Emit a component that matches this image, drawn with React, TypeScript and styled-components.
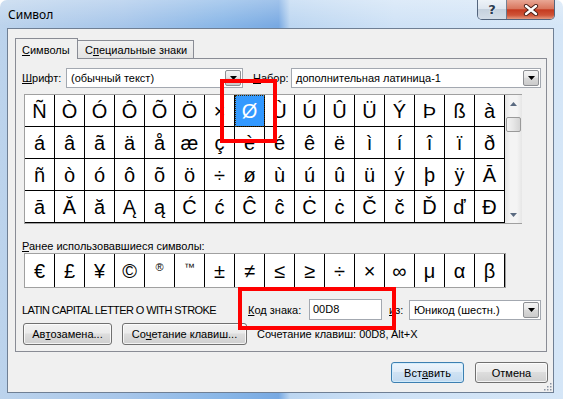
import React from 'react';
import styled, { createGlobalStyle } from 'styled-components';

const GlobalStyle = createGlobalStyle`
  html, body {
    margin: 0;
    padding: 0;
    background: #fff;
  }
  body {
    font-family: 'Liberation Sans', Arial, sans-serif;
    font-size: 11px;
    color: #000;
  }
`;

const GRID_ROWS = [
  'ÑÒÓÔÕÖ×ØÙÚÛÜÝÞßà',
  'áâãäåæçèéêëìíîïð',
  'ñòóôõö÷øùúûüýþÿĀ',
  'āĂăĄąĆćĈĉĊċČčĎďĐ',
];

const RECENT = ['€', '£', '¥', '©', '®', '™', '±', '≠', '≤', '≥', '÷', '×', '∞', 'μ', 'α', 'β'];
const SMALL_RECENT = ['®', '™'];

const Window = styled.div`
  position: relative;
  width: 563px;
  height: 399px;
  display: flex;
  flex-direction: column;
  border-radius: 7px 7px 0 0;
  overflow: hidden;
  background:
    linear-gradient(180deg, rgba(255, 255, 255, 0.3) 0, rgba(255, 255, 255, 0) 26px),
    linear-gradient(90deg, #bcd3ec 0%, #a7c6ea 22%, #88b6e7 40%, #78a9e2 49.5%, #bcd6f1 51.5%, #cfe2f6 70%, #d5e6f7 100%);
`;

const TitleBar = styled.div`
  height: 28px;
  flex-shrink: 0;
  display: flex;
  align-items: flex-start;
  padding: 0 8px;
`;

const Title = styled.div`
  font-family: 'Noto Sans', sans-serif;
  font-size: 12px;
  line-height: 30px;
  color: #000;
`;

const CaptionGroup = styled.div`
  margin-left: auto;
  display: flex;
  height: 20px;
  box-sizing: border-box;
  border: 1px solid rgba(38, 56, 84, 0.75);
  border-top: none;
  border-radius: 0 0 5px 5px;
  overflow: hidden;
`;

const HelpButton = styled.div`
  width: 28px;
  display: flex;
  align-items: center;
  justify-content: center;
  border-right: 1px solid rgba(38, 56, 84, 0.6);
  background: linear-gradient(180deg, #eef3f8 0%, #dfe7f0 45%, #c5d1de 50%, #d3dde8 100%);
  font-family: 'DejaVu Sans', sans-serif;
  font-weight: bold;
  font-size: 13px;
  color: #2a3a50;
  text-shadow: 0 0 2px #fff;
`;

const CloseButton = styled.div`
  width: 47px;
  display: flex;
  align-items: center;
  justify-content: center;
  background: linear-gradient(180deg, #e9a795 0%, #d9775f 45%, #c43a20 52%, #cf5438 80%, #e39a80 100%);
`;

const Client = styled.div`
  position: relative;
  flex: 1;
  margin: 0 9px 6px 7px;
  border: 1px solid #6f7f94;
  background: #f0f0f0;
  padding: 9px 6px 0 7px;
  display: flex;
  flex-direction: column;
`;

const TabStrip = styled.div`
  position: relative;
  z-index: 1;
  height: 21px;
  margin-bottom: -1px;
  display: flex;
  align-items: flex-start;
`;

const Tab = styled.div<{ $active?: boolean; $w: number }>`
  width: ${p => p.$w}px;
  box-sizing: border-box;
  border: 1px solid #898c95;
  border-bottom: none;
  padding-left: ${p => (p.$active ? 6 : 7)}px;
  height: ${p => (p.$active ? 21 : 18)}px;
  margin-top: ${p => (p.$active ? 0 : 2)}px;
  line-height: ${p => (p.$active ? 22 : 18)}px;
  background: ${p => (p.$active ? '#f0f0f0' : 'linear-gradient(180deg, #f2f2f2, #e3e3e3)')};
  ${p => !p.$active && 'border-left: none;'}
  white-space: nowrap;
`;

const Key = styled.span`
  text-decoration: underline;
`;

const Panel = styled.div`
  height: 294px;
  box-sizing: border-box;
  border: 1px solid #898c95;
  padding: 9px 0 0 6px;
  display: flex;
  flex-direction: column;
`;

const FieldRow = styled.div<{ $h?: number; $mt?: number }>`
  display: flex;
  align-items: center;
  height: ${p => p.$h || 20}px;
  margin-top: ${p => p.$mt || 0}px;
  flex-shrink: 0;
`;

const Label = styled.span<{ $w?: number; $ml?: number }>`
  ${p => (p.$w ? `width: ${p.$w}px;` : '')}
  margin-left: ${p => p.$ml || 0}px;
  flex-shrink: 0;
  white-space: nowrap;
`;

const Combo = styled.div<{ $w: number }>`
  width: ${p => p.$w}px;
  height: 20px;
  box-sizing: border-box;
  border: 1px solid #a3a8b0;
  background: #fff;
  display: flex;
  align-items: center;
  flex-shrink: 0;
`;

const ComboText = styled.span`
  flex: 1;
  padding-left: 4px;
  white-space: nowrap;
  overflow: hidden;
`;

const DropButton = styled.div`
  width: 16px;
  height: 16px;
  margin-right: 1px;
  box-sizing: border-box;
  border: 1px solid #8d8f93;
  border-radius: 2px;
  background: linear-gradient(180deg, #f4f4f4 0%, #e8e8e8 45%, #d9d9d9 50%, #cbcbcb 100%);
  display: flex;
  align-items: center;
  justify-content: center;
`;

const TextInput = styled.div<{ $w: number }>`
  width: ${p => p.$w}px;
  height: 21px;
  box-sizing: border-box;
  border: 1px solid #a3a8b0;
  background: #fff;
  padding-left: 3px;
  line-height: 19px;
  flex-shrink: 0;
`;

const CharGrid = styled.div`
  display: flex;
  margin: 6px 0 0 2px;
  border: 1px solid #a0a0a0;
  border-right: none;
  align-self: flex-start;
`;

const CharRows = styled.div`
  display: flex;
  flex-direction: column;
`;

const CharRow = styled.div`
  display: flex;
`;

const Cell = styled.div<{ $selected?: boolean; $h: number; $last?: boolean }>`
  width: 30px;
  height: ${p => p.$h}px;
  box-sizing: border-box;
  border-right: 1px solid #000;
  border-bottom: ${p => (p.$last ? 'none' : '1px solid #000')};
  background: ${p => (p.$selected ? '#3399ff' : '#fff')};
  color: ${p => (p.$selected ? '#fff' : '#000')};
  outline: ${p => (p.$selected ? '1px dotted #3b2600' : 'none')};
  outline-offset: -1px;
  display: flex;
  align-items: center;
  justify-content: center;
  font-family: 'Liberation Sans', Arial, sans-serif;
  font-size: 20px;
  line-height: 1;
`;

const SmallGlyph = styled.span`
  font-size: 11px;
  align-self: flex-start;
  margin-top: 8px;
`;

const ScrollBar = styled.div`
  width: 17px;
  display: flex;
  flex-direction: column;
  align-items: center;
  background: linear-gradient(90deg, #e6e6e6, #f4f4f4 30%, #f4f4f4 70%, #e6e6e6);
`;

const ScrollArrow = styled.div`
  height: 17px;
  width: 17px;
  display: flex;
  align-items: center;
  justify-content: center;
`;

const ScrollThumb = styled.div`
  width: 15px;
  height: 15px;
  margin-top: 5px;
  box-sizing: border-box;
  border: 1px solid #9a9a9a;
  border-radius: 2px;
  background: linear-gradient(90deg, #f3f3f3, #e6e6e6 50%, #d4d4d4);
`;

const ScrollSpacer = styled.div`
  flex: 1;
`;

const RecentRow = styled.div`
  display: flex;
  align-self: flex-start;
  margin: 1px 0 0 2px;
  border: 1px solid #a0a0a0;
`;

const Description = styled.span`
  width: 226px;
  letter-spacing: -0.6px;
  white-space: nowrap;
  flex-shrink: 0;
`;

const Button = styled.div<{ $w: number; $default?: boolean; $h?: number }>`
  width: ${p => p.$w}px;
  height: ${p => p.$h || 22}px;
  box-sizing: border-box;
  flex-shrink: 0;
  border: 1px solid ${p => (p.$default ? '#3c7fb1' : '#707070')};
  border-radius: 3px;
  background: ${p =>
    p.$default
      ? 'linear-gradient(180deg, #edf5fc 0%, #e0ecf8 45%, #cfe2f3 50%, #c2d9ef 100%)'
      : 'linear-gradient(180deg, #f2f2f2 0%, #ebebeb 45%, #dddddd 50%, #cfcfcf 100%)'};
  box-shadow: inset 0 0 0 1px ${p => (p.$default ? 'rgba(210, 236, 252, 0.9)' : 'rgba(255, 255, 255, 0.75)')};
  display: flex;
  align-items: center;
  justify-content: center;
  white-space: nowrap;
`;

const ShortcutNote = styled.span`
  margin-left: 10px;
  white-space: nowrap;
`;

const DialogButtons = styled.div`
  display: flex;
  justify-content: flex-end;
  gap: 11px;
  margin: 10px -1px 0 0;
`;

const Grip = styled.svg`
  position: absolute;
  right: 1px;
  bottom: 1px;
`;

const Annotation = styled.div<{ $x: number; $y: number; $w: number; $h: number }>`
  position: absolute;
  left: ${p => p.$x}px;
  top: ${p => p.$y}px;
  width: ${p => p.$w}px;
  height: ${p => p.$h}px;
  box-sizing: border-box;
  border: 4px solid #f00;
  pointer-events: none;
`;

const Arrow = ({ up, color = '#000' }: { up?: boolean; color?: string }) => (
  <svg width="7" height="4" viewBox="0 0 7 4">
    <path d={up ? 'M0 4 L3.5 0 L7 4 Z' : 'M0 0 L7 0 L3.5 4 Z'} fill={color} />
  </svg>
);

const Select = ({ w, text }: { w: number; text: string }) => (
  <Combo $w={w}>
    <ComboText>{text}</ComboText>
    <DropButton>
      <Arrow />
    </DropButton>
  </Combo>
);

export default function App() {
  return (
    <>
      <GlobalStyle />
      <Window>
        <TitleBar>
          <Title>Символ</Title>
          <CaptionGroup>
            <HelpButton>?</HelpButton>
            <CloseButton>
              <svg width="16" height="12" viewBox="0 0 16 12">
                <path d="M3 2 L13 10 M13 2 L3 10" stroke="#4a2018" strokeWidth="4.2" strokeLinecap="round" />
                <path d="M3 2 L13 10 M13 2 L3 10" stroke="#fff" strokeWidth="2.4" strokeLinecap="round" />
              </svg>
            </CloseButton>
          </CaptionGroup>
        </TitleBar>

        <Client>
          <TabStrip>
            <Tab $active $w={63}>
              <Key>С</Key>имволы
            </Tab>
            <Tab $w={116}>
              С<Key>п</Key>ециальные знаки
            </Tab>
          </TabStrip>

          <Panel>
            <FieldRow>
              <Label $w={44}>
                <Key>Ш</Key>рифт:
              </Label>
              <Select w={177} text="(обычный текст)" />
              <Label $w={38} $ml={10}>
                <Key>Н</Key>абор:
              </Label>
              <Select w={250} text="дополнительная латиница-1" />
            </FieldRow>

            <CharGrid>
              <CharRows>
                {GRID_ROWS.map((row, r) => (
                  <CharRow key={r}>
                    {Array.from(row).map((ch, c) => (
                      <Cell key={c} $h={32} $selected={r === 0 && c === 7}>
                        {ch}
                      </Cell>
                    ))}
                  </CharRow>
                ))}
              </CharRows>
              <ScrollBar>
                <ScrollArrow>
                  <Arrow up color="#5a6a80" />
                </ScrollArrow>
                <ScrollThumb />
                <ScrollSpacer />
                <ScrollArrow>
                  <Arrow color="#5a6a80" />
                </ScrollArrow>
              </ScrollBar>
            </CharGrid>

            <FieldRow $h={13} $mt={15}>
              <Label>
                <Key>Р</Key>анее использовавшиеся символы:
              </Label>
            </FieldRow>
            <RecentRow>
              {RECENT.map((ch, i) => (
                <Cell key={i} $h={33} $last>
                  {SMALL_RECENT.includes(ch) ? <SmallGlyph>{ch}</SmallGlyph> : ch}
                </Cell>
              ))}
            </RecentRow>

            <FieldRow $h={21} $mt={11}>
              <Description>LATIN CAPITAL LETTER O WITH STROKE</Description>
              <Label $w={61}>
                <Key>К</Key>од знака:
              </Label>
              <TextInput $w={73}>00D8</TextInput>
              <Label $w={20} $ml={7}>
                <Key>и</Key>з:
              </Label>
              <Select w={132} text="Юникод (шестн.)" />
            </FieldRow>

            <FieldRow $h={22} $mt={3}>
              <Button $w={89} style={{ marginLeft: 1 }}>
                Ав<Key>т</Key>озамена...
              </Button>
              <Button $w={125} style={{ marginLeft: 10 }}>
                Со<Key>ч</Key>етание клавиш...
              </Button>
              <ShortcutNote>Сочетание клавиш: 00D8, Alt+X</ShortcutNote>
            </FieldRow>
          </Panel>

          <DialogButtons>
            <Button $w={73} $h={21} $default>
              Вст<Key>а</Key>вить
            </Button>
            <Button $w={73} $h={21}>
              Отмена
            </Button>
          </DialogButtons>

          <Grip width="10" height="10" viewBox="0 0 10 10">
            {[
              [8, 2], [8, 5], [5, 5], [8, 8], [5, 8], [2, 8],
            ].map(([x, y], i) => (
              <rect key={i} x={x} y={y} width="1.5" height="1.5" fill="#8a94a3" />
            ))}
          </Grip>
        </Client>

        <Annotation $x={220} $y={79} $w={57} $h={64} />
        <Annotation $x={238} $y={287} $w={158} $h={43} />
      </Window>
    </>
  );
}
